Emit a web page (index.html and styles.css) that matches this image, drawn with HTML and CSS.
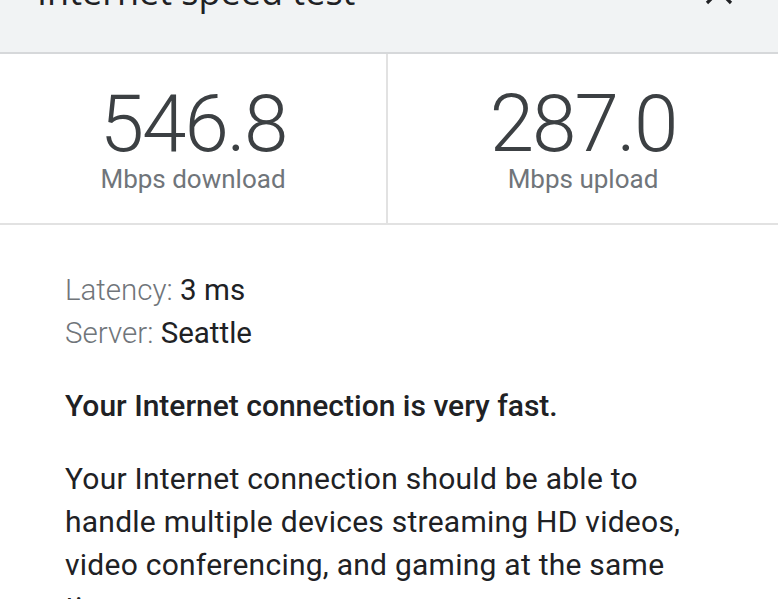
FILE: index.html
```html
<!DOCTYPE html>
<html lang="en">
<head>
<meta charset="utf-8">
<title>Internet speed test</title>
<link rel="stylesheet" href="styles.css">
</head>
<body>
<header class="header">
  <h1 class="title">Internet speed test</h1>
  <button class="close" aria-label="Close">
    <svg viewBox="0 0 28 28" width="28" height="28"><path d="M2 2 L26 26 M26 2 L2 26" stroke="#202124" stroke-width="3.2" fill="none"/></svg>
  </button>
</header>
<section class="stats">
  <div class="stat">
    <div class="value">546.8</div>
    <div class="unit">Mbps download</div>
  </div>
  <div class="stat">
    <div class="value">287.0</div>
    <div class="unit">Mbps upload</div>
  </div>
</section>
<section class="details">
  <div class="meta"><span class="key">Latency:</span> <span class="val">3 ms</span></div>
  <div class="meta"><span class="key">Server:</span> <span class="val">Seattle</span></div>
  <p class="verdict">Your Internet connection is very fast.</p>
  <p class="desc">Your Internet connection should be able to handle multiple devices streaming HD videos, video conferencing, and gaming at the same time.</p>
</section>
</body>
</html>
```
FILE: styles.css
```css
html, body {
  margin: 0;
  padding: 0;
  background: #ffffff;
  overflow: hidden;
}
body {
  font-family: Roboto, "Noto Sans", sans-serif;
  color: #202124;
}
.header {
  height: 94px;
  margin-top: -40px;
  background: #f1f3f4;
  border-bottom: 2px solid #d6d8da;
  display: flex;
  align-items: flex-start;
  justify-content: space-between;
  padding: 0 45px 0 37px;
  box-sizing: border-box;
}
.title {
  margin: 12px 0 0 0;
  font-family: "Open Sans", Roboto, sans-serif;
  font-weight: 500;
  font-size: 36px;
  line-height: 40px;
  color: #202124;
}
.close {
  border: 0;
  background: none;
  padding: 0;
  margin-top: 17px;
  width: 28px;
  height: 28px;
  display: block;
}
.close svg {
  display: block;
}
.stats {
  display: grid;
  grid-template-columns: 388px 1fr;
  border-bottom: 2px solid #e2e2e2;
}
.stat {
  height: 169px;
  display: flex;
  flex-direction: column;
  align-items: center;
  justify-content: center;
}
.stat:first-child {
  border-right: 2px solid #e2e2e2;
}
.value {
  font-weight: 300;
  font-size: 80px;
  line-height: 80px;
  color: #3c4043;
  letter-spacing: -2px;
}
.unit {
  font-size: 26px;
  line-height: 30px;
  color: #70757a;
}
.details {
  padding: 44px 65px 0 65px;
}
.meta {
  font-size: 29.5px;
  line-height: 43px;
}
.key {
  font-weight: 300;
  color: #70757a;
}
.val {
  color: #202124;
}
.verdict {
  margin: 29px 0 0 0;
  font-size: 30px;
  font-weight: 500;
  line-height: 43px;
}
.desc {
  margin: 30px 0 0 0;
  font-size: 30px;
  letter-spacing: 0.25px;
  line-height: 43px;
}
```
